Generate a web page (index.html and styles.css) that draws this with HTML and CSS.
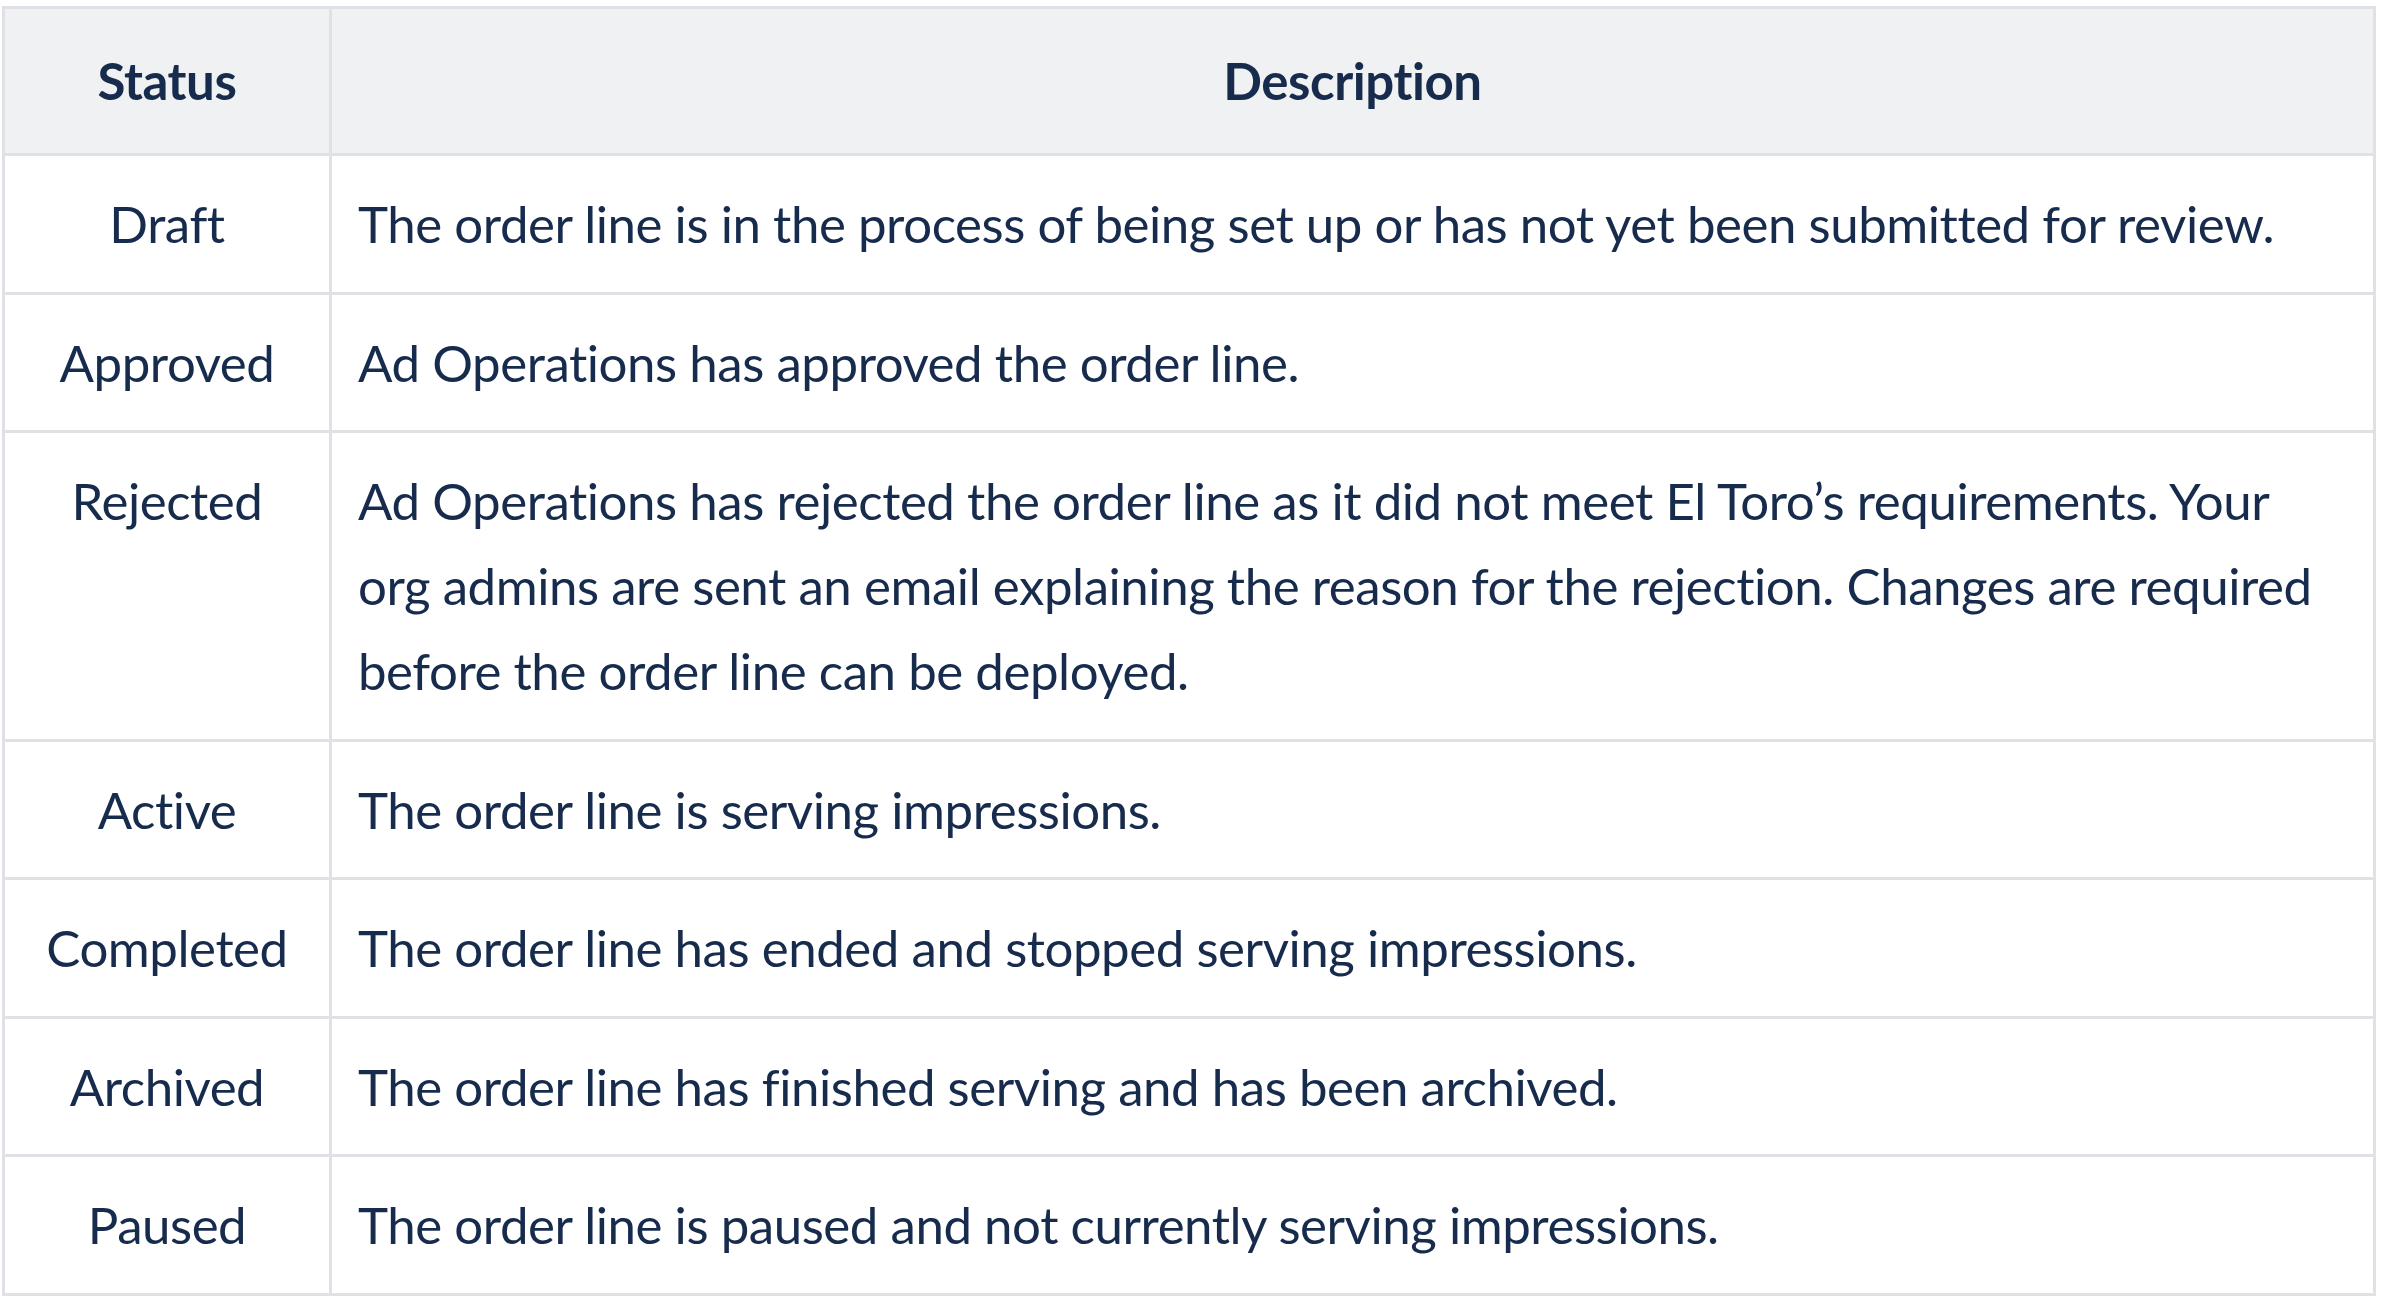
FILE: index.html
```html
<!DOCTYPE html>
<html lang="en">
<head>
<meta charset="utf-8">
<title>Order line statuses</title>
<link rel="stylesheet" href="styles.css">
</head>
<body>
<table class="status-table">
  <colgroup>
    <col class="col-status">
    <col class="col-desc">
  </colgroup>
  <thead>
    <tr>
      <th>Status</th>
      <th>Description</th>
    </tr>
  </thead>
  <tbody>
    <tr>
      <td class="status">Draft</td>
      <td class="desc">The order line is in the process of being set up or has not yet been submitted for review.</td>
    </tr>
    <tr>
      <td class="status">Approved</td>
      <td class="desc">Ad Operations has approved the order line.</td>
    </tr>
    <tr>
      <td class="status">Rejected</td>
      <td class="desc">Ad Operations has rejected the order line as it did not meet El Toro’s requirements. Your org admins are sent an email explaining the reason for the rejection. Changes are required before the order line can be deployed.</td>
    </tr>
    <tr>
      <td class="status">Active</td>
      <td class="desc">The order line is serving impressions.</td>
    </tr>
    <tr>
      <td class="status">Completed</td>
      <td class="desc">The order line has ended and stopped serving impressions.</td>
    </tr>
    <tr>
      <td class="status">Archived</td>
      <td class="desc">The order line has finished serving and has been archived.</td>
    </tr>
    <tr>
      <td class="status">Paused</td>
      <td class="desc">The order line is paused and not currently serving impressions.</td>
    </tr>
  </tbody>
</table>
</body>
</html>
```
FILE: styles.css
```css
html, body {
  margin: 0;
  padding: 0;
  background: #ffffff;
}
body {
  padding: 6px 0 0 2px;
  font-family: Lato, "Open Sans", sans-serif;
  color: #172b4d;
}
.status-table {
  border-collapse: collapse;
  width: 2374px;
  table-layout: fixed;
  font-size: 51px;
  letter-spacing: -0.45px;
  font-variant-ligatures: none;
  line-height: 85px;
  border: 3px solid #dfe1e6;
}
.col-status {
  width: 327px;
}
.status-table th,
.status-table td {
  border: 3px solid #dfe1e6;
  padding: 25px 26px 25.5px;
  vertical-align: top;
}
.status-table th {
  background: #f0f1f3;
  font-weight: 700;
  text-align: center;
  padding-top: 29px;
  padding-bottom: 30px;
}
.status {
  text-align: center;
}
.desc {
  text-align: left;
}
```
